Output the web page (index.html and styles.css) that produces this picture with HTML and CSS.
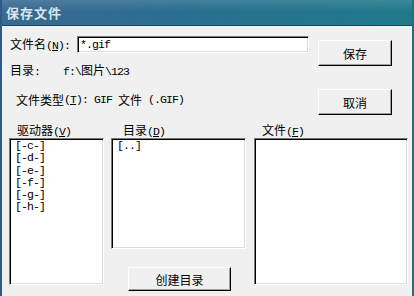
FILE: index.html
```html
<!DOCTYPE html>
<html lang="zh-CN">
<head>
    <meta charset="UTF-8">
    <title>保存文件</title>
    <link rel="stylesheet" href="styles.css">
</head>
<body>

<div class="window">
    <div class="titlebar">保存文件</div>
    <div class="content">
        <div class="top">
            <div class="fields">
                <div class="row name-row">
                    <label class="name-label" for="file-name">文件名<span class="en">(<u>N</u>):</span></label>
                    <input class="text-input" id="file-name" type="text" value="*.gif">
                </div>
                <div class="row path-row">
                    <span class="path-label">目录<span class="en">:</span></span>
                    <span class="path"><span class="en">f:\</span>图片<span class="en">\123</span></span>
                </div>
                <div class="row type-row">文件类型<span class="en">(<u>T</u>): GIF </span>文件<span class="en"> (.GIF)</span></div>
            </div>
            <div class="actions">
                <button class="btn save-btn">保存</button>
                <button class="btn cancel-btn">取消</button>
            </div>
        </div>

        <div class="panes">
            <div class="pane drives">
                <div class="pane-label">驱动器<span class="en">(<u>V</u>)</span></div>
                <ul class="listbox">
                    <li>[-c-]</li>
                    <li>[-d-]</li>
                    <li>[-e-]</li>
                    <li>[-f-]</li>
                    <li>[-g-]</li>
                    <li>[-h-]</li>
                </ul>
            </div>
            <div class="pane dirs">
                <div class="pane-label">目录<span class="en">(<u>D</u>)</span></div>
                <ul class="listbox">
                    <li>[..]</li>
                </ul>
                <button class="btn mkdir-btn">创建目录</button>
            </div>
            <div class="pane files">
                <div class="pane-label">文件<span class="en">(<u>F</u>)</span></div>
                <ul class="listbox"></ul>
            </div>
        </div>
    </div>
</div>

</body>
</html>
```

FILE: styles.css
```css
body {
    margin: 0;
    background: #f0f0f0;
    font-family: "Noto Sans CJK SC", "Noto Sans", sans-serif;
    font-size: 12px;
    color: #000;
}
.window {
    width: 410px;
    height: 296px;
    border-left: 2px solid #2b5b89;
    border-right: 2px solid #1d7282;
    background: #f0f0f0;
    overflow: hidden;
}
.titlebar {
    height: 25px;
    line-height: 25px;
    padding-left: 4px;
    border-bottom: 1px solid #16475c;
    background:
        linear-gradient(to bottom, rgba(255, 255, 255, 0.12), rgba(255, 255, 255, 0) 45%),
        linear-gradient(90deg, #3a6992, #2a6f8f 45%, #1f7a8b);
    color: #dde5eb;
    font-size: 13px;
    font-weight: bold;
    letter-spacing: 1px;
}
.en {
    font-family: "Liberation Mono", monospace;
    font-size: 11.5px;
    letter-spacing: -0.9px;
}

/* upper part: name, folder, type + buttons */
.top {
    display: flex;
    height: 95px;
}
.fields {
    flex: 1;
    padding-left: 8px;
}
.row {
    display: flex;
    align-items: center;
    line-height: 16px;
}
.name-row {
    margin-top: 10px;
    height: 17px;
}
.name-label {
    width: 67px;
}
.text-input {
    box-sizing: border-box;
    width: 232px;
    height: 17px;
    margin: 0;
    padding: 0 2px;
    border: 1px solid;
    border-color: #7a7a7a #fff #fff #7a7a7a;
    box-shadow: inset 1px 1px #000, inset -1px -1px #dcdcdc;
    background: #fff;
    font-family: "Liberation Mono", monospace;
    font-size: 11.5px;
    letter-spacing: -0.9px;
    outline: none;
}
.path-row {
    margin-top: 9px;
}
.path-label {
    width: 53px;
}
.type-row {
    margin-top: 12px;
    padding-left: 6px;
    white-space: pre;
}
.actions {
    display: flex;
    flex-direction: column;
    width: 74px;
    margin: 0 20px 0 9px;
}
.btn {
    box-sizing: border-box;
    margin: 0;
    padding: 0;
    border: 1px solid;
    border-color: #fff #000 #000 #fff;
    box-shadow: inset -1px -1px #a0a0a0;
    background: #f0f0f0;
    font-family: "Noto Sans CJK SC", sans-serif;
    font-size: 12px;
    color: #000;
}
.save-btn,
.cancel-btn {
    height: 26px;
}
.save-btn {
    margin-top: 14px;
}
.cancel-btn {
    margin-top: 23px;
}

/* lower part: three lists */
.panes {
    display: flex;
    padding-left: 7px;
}
.pane {
    display: flex;
    flex-direction: column;
}
.pane-label {
    height: 17px;
    line-height: 17px;
    padding-left: 8px;
}
.drives {
    width: 95px;
}
.dirs {
    width: 135px;
    margin-left: 7px;
}
.dirs .pane-label {
    padding-left: 12px;
}
.files {
    width: 154px;
    margin-left: 8px;
}
.listbox {
    box-sizing: border-box;
    height: 147px;
    margin: 0;
    padding: 0 3px;
    list-style: none;
    border: 1px solid;
    border-color: #7a7a7a #fff #fff #7a7a7a;
    box-shadow: inset 1px 1px #000, inset -1px -1px #dcdcdc;
    background: #fff;
    font-family: "Liberation Mono", monospace;
    font-size: 11.5px;
    letter-spacing: -0.9px;
    line-height: 12.3px;
}
.listbox li {
    padding-left: 2px;
}
.listbox li:first-child {
    margin-top: 1px;
}
.dirs .listbox {
    height: 111px;
}
.mkdir-btn {
    width: 103px;
    height: 24px;
    margin: 18px 0 0 17px;
}
```
